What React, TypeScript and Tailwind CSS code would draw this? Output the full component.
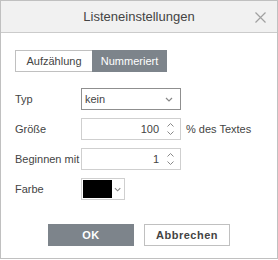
import { useState } from "react";

// Dialog "Listeneinstellungen" — Aufzählung / Nummeriert, Typ, Größe, Beginn, Farbe.
function Chevron({ className = "" }: { className?: string }) {
  return (
    <svg width="8" height="5" viewBox="0 0 8 5" className={className}>
      <path d="M1 1 L4 4 L7 1" fill="none" stroke="currentColor" strokeWidth="1.2" />
    </svg>
  );
}

function Spinner() {
  return (
    <div className="flex flex-col items-center gap-[4px] text-[#888]">
      <svg width="7" height="4" viewBox="0 0 7 4">
        <path d="M0.5 3.5 L3.5 0.5 L6.5 3.5" fill="none" stroke="currentColor" strokeWidth="1" />
      </svg>
      <svg width="7" height="4" viewBox="0 0 7 4">
        <path d="M0.5 0.5 L3.5 3.5 L6.5 0.5" fill="none" stroke="currentColor" strokeWidth="1" />
      </svg>
    </div>
  );
}

function Row({ label, children }: { label: string; children: React.ReactNode }) {
  return (
    <div className="flex h-[22px] items-center">
      <span className="w-[66px] shrink-0 text-[#444]">{label}</span>
      {children}
    </div>
  );
}

function NumberField({ value }: { value: string }) {
  return (
    <div className="flex h-[22px] w-[100px] items-center justify-end gap-[8px] border border-[#cfcfcf] bg-white pr-[6px]">
      <span className="text-[#444]">{value}</span>
      <Spinner />
    </div>
  );
}

export default function App() {
  const [tab, setTab] = useState<"bullet" | "number">("number");

  return (
    <div
      className="flex h-[259px] w-[278px] flex-col border border-[#c0c0c0] bg-white text-[11px]"
      style={{ fontFamily: '"Liberation Sans", Arial, sans-serif' }}
    >
      <div className="relative flex h-[32px] shrink-0 items-center justify-center border-b border-[#cbcbcb] bg-[#f1f1f1]">
        <span className="text-[13px] text-[#444]">Listeneinstellungen</span>
        <svg
          width="11"
          height="11"
          viewBox="0 0 11 11"
          className="absolute right-[11px] top-[11px] text-[#a0a0a0]"
        >
          <path d="M0.5 0.5 L10.5 10.5 M10.5 0.5 L0.5 10.5" stroke="currentColor" strokeWidth="1.2" />
        </svg>
      </div>

      <div className="flex flex-col pl-[14px] pt-[17px]">
        <div className="flex h-[22px]">
          <button
            onClick={() => setTab("bullet")}
            className={
              tab === "bullet"
                ? "w-[77px] bg-[#7d848b] text-white"
                : "w-[77px] border border-r-0 border-[#c0c0c0] bg-white text-[#444]"
            }
          >
            Aufzählung
          </button>
          <button
            onClick={() => setTab("number")}
            className={
              tab === "number"
                ? "w-[75px] bg-[#7d848b] text-white"
                : "w-[75px] border border-l-0 border-[#c0c0c0] bg-white text-[#444]"
            }
          >
            Nummeriert
          </button>
        </div>

        <div className="mt-[16px] flex flex-col gap-[8px]">
          <Row label="Typ">
            <div className="flex h-[22px] w-[100px] items-center justify-between border border-[#8f8f8f] bg-white pl-[3px] pr-[7px]">
              <span className="text-[#444]">kein</span>
              <Chevron className="text-[#888]" />
            </div>
          </Row>
          <Row label="Größe">
            <NumberField value="100" />
            <span className="ml-[5px] text-[#444]">% des Textes</span>
          </Row>
          <Row label="Beginnen mit">
            <NumberField value="1" />
          </Row>
          <Row label="Farbe">
            <div className="flex h-[22px] w-[44px] items-center border border-[#cfcfcf] bg-white pl-[1px] pr-[3px]">
              <div className="h-[18px] w-[32px] bg-black" />
              <Chevron className="ml-[2px] text-[#888]" />
            </div>
          </Row>
        </div>

        <div className="mt-[24px] flex justify-center gap-[10px] pr-[14px]">
          <button className="h-[22px] w-[86px] bg-[#7d848b] font-bold tracking-[0.5px] text-white">
            OK
          </button>
          <button className="h-[22px] w-[86px] border border-[#c0c0c0] bg-white font-bold tracking-[0.5px] text-[#444]">
            Abbrechen
          </button>
        </div>
      </div>
    </div>
  );
}
